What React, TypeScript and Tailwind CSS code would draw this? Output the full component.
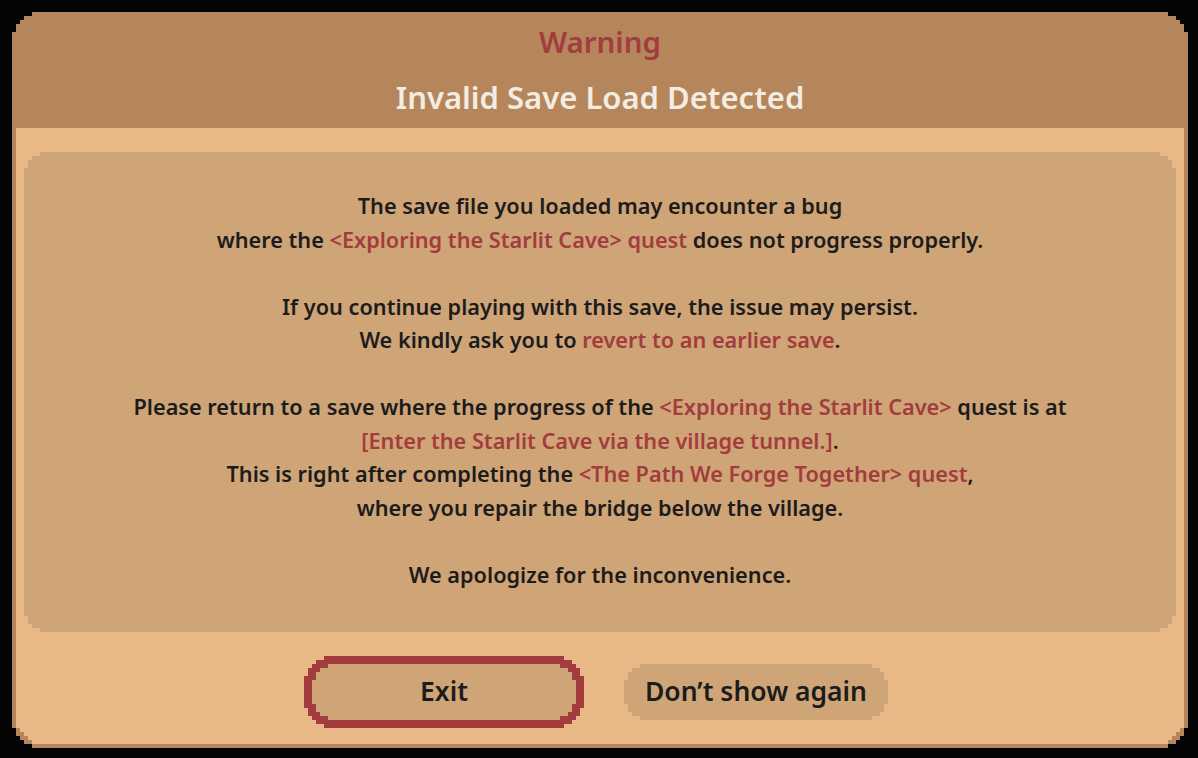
const clipLarge =
  "[clip-path:polygon(0_20px,4px_20px,4px_12px,8px_12px,8px_8px,12px_8px,12px_4px,20px_4px,20px_0,calc(100%_-_20px)_0,calc(100%_-_20px)_4px,calc(100%_-_12px)_4px,calc(100%_-_12px)_8px,calc(100%_-_8px)_8px,calc(100%_-_8px)_12px,calc(100%_-_4px)_12px,calc(100%_-_4px)_20px,100%_20px,100%_calc(100%_-_20px),calc(100%_-_4px)_calc(100%_-_20px),calc(100%_-_4px)_calc(100%_-_12px),calc(100%_-_8px)_calc(100%_-_12px),calc(100%_-_8px)_calc(100%_-_8px),calc(100%_-_12px)_calc(100%_-_8px),calc(100%_-_12px)_calc(100%_-_4px),calc(100%_-_20px)_calc(100%_-_4px),calc(100%_-_20px)_100%,20px_100%,20px_calc(100%_-_4px),12px_calc(100%_-_4px),12px_calc(100%_-_8px),8px_calc(100%_-_8px),8px_calc(100%_-_12px),4px_calc(100%_-_12px),4px_calc(100%_-_20px),0_calc(100%_-_20px))]";

const clipSmall =
  "[clip-path:polygon(0_16px,4px_16px,4px_8px,8px_8px,8px_4px,16px_4px,16px_0,calc(100%_-_16px)_0,calc(100%_-_16px)_4px,calc(100%_-_8px)_4px,calc(100%_-_8px)_8px,calc(100%_-_4px)_8px,calc(100%_-_4px)_16px,100%_16px,100%_calc(100%_-_16px),calc(100%_-_4px)_calc(100%_-_16px),calc(100%_-_4px)_calc(100%_-_8px),calc(100%_-_8px)_calc(100%_-_8px),calc(100%_-_8px)_calc(100%_-_4px),calc(100%_-_16px)_calc(100%_-_4px),calc(100%_-_16px)_100%,16px_100%,16px_calc(100%_-_4px),8px_calc(100%_-_4px),8px_calc(100%_-_8px),4px_calc(100%_-_8px),4px_calc(100%_-_16px),0_calc(100%_-_16px))]";

const clipBottom =
  "[clip-path:polygon(0_0,100%_0,100%_calc(100%_-_16px),calc(100%_-_4px)_calc(100%_-_16px),calc(100%_-_4px)_calc(100%_-_12px),calc(100%_-_8px)_calc(100%_-_12px),calc(100%_-_8px)_calc(100%_-_8px),calc(100%_-_12px)_calc(100%_-_8px),calc(100%_-_12px)_calc(100%_-_4px),calc(100%_-_16px)_calc(100%_-_4px),calc(100%_-_16px)_100%,16px_100%,16px_calc(100%_-_4px),12px_calc(100%_-_4px),12px_calc(100%_-_8px),8px_calc(100%_-_8px),8px_calc(100%_-_12px),4px_calc(100%_-_12px),4px_calc(100%_-_16px),0_calc(100%_-_16px))]";

function Hi({ children }: { children: React.ReactNode }) {
  return <span className="text-[#a33c3e]">{children}</span>;
}

function App() {
  return (
    <div className="w-[1198px] h-[758px] bg-[#050505] pl-3 pt-3 font-['Noto_Sans',sans-serif]">
      <div className={`w-[1176px] h-[736px] bg-[#b5865c] flex flex-col ${clipLarge}`}>
        {/* header */}
        <div className="h-[116px] flex flex-col items-center pt-[10px] font-semibold leading-[40px]">
          <h1 className="text-[#a33c3e] text-[29.5px]">Warning</h1>
          <h2 className="text-[#f3ece0] text-[31px] mt-[15px]">Invalid Save Load Detected</h2>
        </div>

        {/* body */}
        <div className={`flex-1 mx-1 mb-1 bg-[#e8b987] px-2 pt-6 flex flex-col ${clipBottom}`}>
          <div
            className={`h-[480px] bg-[#cfa477] pt-[37px] text-center text-[21.7px] leading-[33.5px] font-semibold text-[#1c1c1c] ${clipSmall}`}
          >
            <p>The save file you loaded may encounter a bug</p>
            <p>
              where the <Hi>&lt;Exploring the Starlit Cave&gt; quest</Hi> does not progress properly.
            </p>
            <p>&nbsp;</p>
            <p>If you continue playing with this save, the issue may persist.</p>
            <p>
              We kindly ask you to <Hi>revert to an earlier save</Hi>.
            </p>
            <p>&nbsp;</p>
            <p>
              Please return to a save where the progress of the <Hi>&lt;Exploring the Starlit Cave&gt;</Hi> quest is at
            </p>
            <p>
              <Hi>[Enter the Starlit Cave via the village tunnel.]</Hi>.
            </p>
            <p>
              This is right after completing the <Hi>&lt;The Path We Forge Together&gt; quest</Hi>,
            </p>
            <p>where you repair the bridge below the village.</p>
            <p>&nbsp;</p>
            <p>We apologize for the inconvenience.</p>
          </div>

          {/* buttons */}
          <div className="flex justify-center items-center gap-10 mt-6 pr-2 text-[26.5px] font-semibold text-[#1c1c1c]">
            <button className={`w-[280px] h-[72px] bg-[#a33c3e] p-2 ${clipLarge}`}>
              <div className={`w-full h-full bg-[#cfa477] flex items-center justify-center ${clipSmall}`}>Exit</div>
            </button>
            <button
              className={`w-[264px] h-[56px] bg-[#cfa477] flex items-center justify-center ${clipSmall}`}
            >
              Don’t show again
            </button>
          </div>
        </div>
      </div>
    </div>
  );
}

export default App;
